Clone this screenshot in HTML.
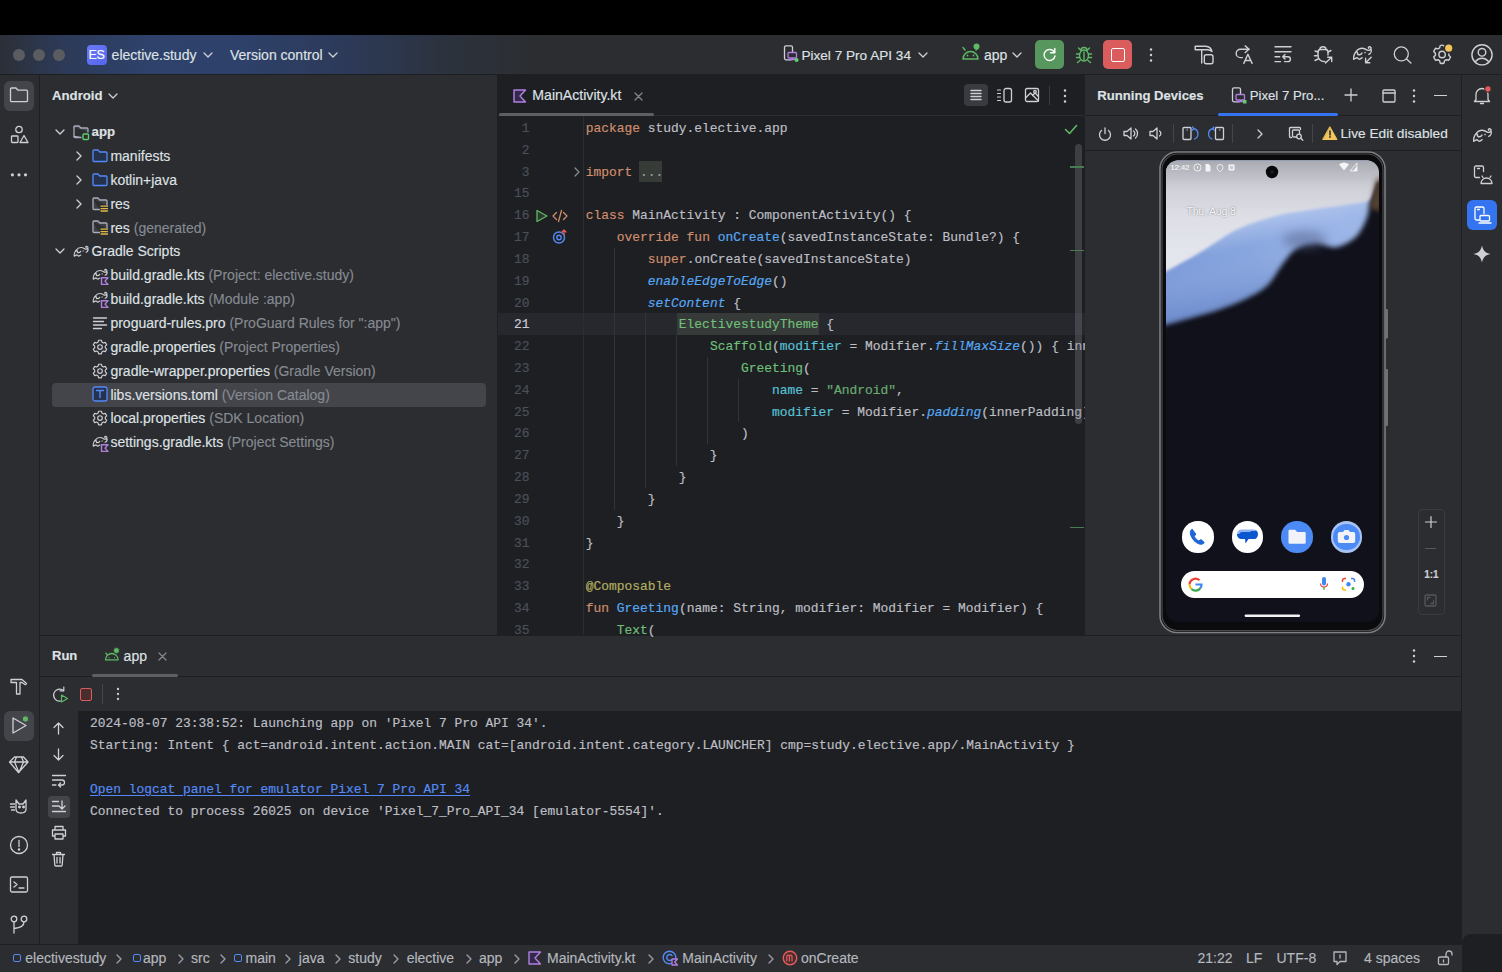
<!DOCTYPE html>
<html><head><meta charset="utf-8">
<style>
*{margin:0;padding:0;box-sizing:border-box}
html,body{width:1502px;height:972px;overflow:hidden;background:#000;font-family:"Liberation Sans",sans-serif;color:#DFE1E5;font-size:14px}
.a{position:absolute}
.t{position:absolute;white-space:pre}
svg{position:absolute;overflow:visible}
.t{-webkit-text-stroke:0.15px currentColor}
.t.m{-webkit-text-stroke:0.18px currentColor}
.ic{fill:none;stroke:#CED0D6;stroke-width:1.3;stroke-linecap:round;stroke-linejoin:round}
</style></head><body>

<div class="a" style="left:0px;top:35px;width:1502px;height:40px;background:#2B2D30;"></div>
<div class="a" style="left:0px;top:35px;width:1502px;height:39px;background:linear-gradient(90deg,#2B2F37 0px,#2D3A57 60px,#2E426B 150px,#2E416A 240px,#2D3A5A 340px,#2C333F 440px,#2B2D30 540px);"></div>
<div class="a" style="left:0px;top:74px;width:1502px;height:1px;background:#1E1F22;"></div>
<div class="a" style="left:0px;top:75px;width:39px;height:870px;background:#2B2D30;"></div>
<div class="a" style="left:39px;top:75px;width:1px;height:870px;background:#1E1F22;"></div>
<div class="a" style="left:40px;top:75px;width:457px;height:560px;background:#2B2D30;"></div>
<div class="a" style="left:497px;top:75px;width:1px;height:560px;background:#1E1F22;"></div>
<div class="a" style="left:498px;top:75px;width:587px;height:560px;background:#1E1F22;"></div>
<div class="a" style="left:1085px;top:75px;width:376px;height:560px;background:#2B2D30;"></div>
<div class="a" style="left:1461px;top:75px;width:1px;height:870px;background:#1E1F22;"></div>
<div class="a" style="left:1462px;top:75px;width:40px;height:870px;background:#2B2D30;"></div>
<div class="a" style="left:40px;top:635px;width:1421px;height:1px;background:#1E1F22;"></div>
<div class="a" style="left:40px;top:636px;width:1421px;height:75px;background:#2B2D30;"></div>
<div class="a" style="left:40px;top:676px;width:1421px;height:1px;background:#1E1F22;"></div>
<div class="a" style="left:40px;top:711px;width:38px;height:233px;background:#2B2D30;"></div>
<div class="a" style="left:78px;top:711px;width:1383px;height:233px;background:#1E1F22;"></div>
<div class="a" style="left:0px;top:944px;width:1502px;height:1px;background:#1E1F22;"></div>
<div class="a" style="left:0px;top:945px;width:1502px;height:27px;background:#2B2D30;"></div>
<div class="a" style="left:1462px;top:934px;width:40px;height:38px;background:#1E1F22;border-top-left-radius:9px"></div>
<div class="a" style="left:12.5px;top:48.5px;width:12px;height:12px;border-radius:6px;background:#5B5C60"></div>
<div class="a" style="left:32.5px;top:48.5px;width:12px;height:12px;border-radius:6px;background:#5B5C60"></div>
<div class="a" style="left:52.5px;top:48.5px;width:12px;height:12px;border-radius:6px;background:#5B5C60"></div>
<div class="a" style="left:87px;top:45px;width:20px;height:20px;background:linear-gradient(135deg,#6B7BF5,#5565EE);border-radius:4px"></div>
<div class="t" style="left:88.60px;top:46.23px;font-size:12.6px;line-height:18px;color:#FFFFFF;font-weight:400;font-family:'Liberation Sans',sans-serif;letter-spacing:-0.6px">ES</div>
<div class="t" style="left:111.60px;top:45.15px;font-size:14px;line-height:20px;color:#DFE1E5;font-weight:400;font-family:'Liberation Sans',sans-serif;">elective.study</div>
<svg class="ic" style="left:202.5px;top:52px;" width="10" height="6" viewBox="0 0 10 6"><path d="M1 1 L5 5 L9 1" style="stroke:#CED0D6"/></svg>
<div class="t" style="left:230.00px;top:45.15px;font-size:14px;line-height:20px;color:#DFE1E5;font-weight:400;font-family:'Liberation Sans',sans-serif;">Version control</div>
<svg class="ic" style="left:328px;top:52px;" width="10" height="6" viewBox="0 0 10 6"><path d="M1 1 L5 5 L9 1" style="stroke:#CED0D6"/></svg>
<svg class="ic" style="left:783px;top:45px;" width="16" height="18" viewBox="0 0 16 18"><rect x="1.5" y="0.8" width="8" height="14" rx="1.5"/><rect x="5" y="7.5" width="8.5" height="5.5" rx="1" style="stroke:#B07FE0;fill:#2B2D30"/><path d="M6 14.5 h6" style="stroke:#B07FE0"/><circle cx="13.6" cy="15" r="2" style="fill:#5FD068;stroke:none"/></svg>
<div class="t" style="left:801.40px;top:45.79px;font-size:13.6px;line-height:19px;color:#DFE1E5;font-weight:400;font-family:'Liberation Sans',sans-serif;">Pixel 7 Pro API 34</div>
<svg class="ic" style="left:918px;top:52px;" width="10" height="6" viewBox="0 0 10 6"><path d="M1 1 L5 5 L9 1" style="stroke:#CED0D6"/></svg>
<svg class="ic" style="left:961px;top:44px;" width="20" height="18" viewBox="0 0 20 18"><path d="M2 15 a7.5 7.5 0 0 1 15 0 z" style="stroke:#5FB865;stroke-width:1.5"/><path d="M4 6 l-2 -2.5 M15 6 l2 -2.5" style="stroke:#5FB865;stroke-width:1.5"/><circle cx="6.5" cy="11.5" r="0.9" style="fill:#5FB865;stroke:none"/><circle cx="12.5" cy="11.5" r="0.9" style="fill:#5FB865;stroke:none"/><circle cx="15.5" cy="2.5" r="3" style="fill:#5FB865;stroke:none"/></svg>
<div class="t" style="left:984.00px;top:45.15px;font-size:14px;line-height:20px;color:#DFE1E5;font-weight:400;font-family:'Liberation Sans',sans-serif;">app</div>
<svg class="ic" style="left:1012px;top:52px;" width="10" height="6" viewBox="0 0 10 6"><path d="M1 1 L5 5 L9 1" style="stroke:#CED0D6"/></svg>
<div class="a" style="left:1035px;top:40px;width:29px;height:29px;background:#57965C;border-radius:5px"></div>
<svg class="ic" style="left:1041px;top:46px;" width="17" height="17" viewBox="0 0 17 17"><path d="M13.5 6.5 A5.5 5.5 0 1 0 14 10" style="stroke:#FFFFFF;stroke-width:1.4"/><path d="M13.8 2.5 v4.3 h-4.3" style="stroke:#FFFFFF;stroke-width:1.4"/></svg>
<svg class="ic" style="left:1075px;top:45px;" width="18" height="18" viewBox="0 0 18 18"><ellipse cx="9" cy="10.5" rx="4.5" ry="5.5" style="stroke:#5FB865;stroke-width:1.4"/><path d="M6 5.5 a3 3 0 0 1 6 0 M4.5 9 h-3 M13.5 9 h3 M4.5 12.5 h-3 M13.5 12.5 h3 M5 15.5 l-2.5 2 M13 15.5 l2.5 2 M5.5 5 l-2 -2 M12.5 5 l2 -2 M9 7 v8" style="stroke:#5FB865;stroke-width:1.4"/></svg>
<div class="a" style="left:1103px;top:40px;width:29px;height:29px;background:#DB5C5C;border-radius:5px"></div>
<div class="a" style="left:1110.5px;top:47.5px;width:14px;height:14px;background:transparent;border:1.6px solid #FFFFFF;border-radius:2px"></div>
<svg class="ic" style="left:1143px;top:46.5px;" width="16" height="16" viewBox="0 0 16 16"><circle cx="8" cy="2.5" r="1.2" style="fill:#CED0D6;stroke:none"/><circle cx="8" cy="8" r="1.2" style="fill:#CED0D6;stroke:none"/><circle cx="8" cy="13.5" r="1.2" style="fill:#CED0D6;stroke:none"/></svg>
<svg class="ic" style="left:1190px;top:40px;" width="30" height="30" viewBox="0 0 30 30"><path d="M5.2 6.3 h10.5 a7 7 0 0 1 6.3 5.2 a6 6 0 0 0 -4.8 -1.8 h-12 z" style="stroke-width:1.4"/><path d="M11.7 9.8 v13.2" style="stroke-width:1.4"/><rect x="14.3" y="14.7" width="8.7" height="9.1" rx="2" style="stroke-width:1.4"/></svg>
<svg class="ic" style="left:1230px;top:40px;" width="30" height="30" viewBox="0 0 30 30"><path d="M12.4 17.6 h-2 a4.2 4.2 0 0 1 0 -8.4 h8.6" style="stroke-width:1.4"/><path d="M15.2 5.9 l3.8 3.3 l-3.8 3.3" style="stroke-width:1.4"/><path d="M13.8 23.4 l4.1 -9.1 l4.2 9.1 M15.1 20.5 h5.6" style="stroke-width:1.4"/></svg>
<svg class="ic" style="left:1270px;top:40px;" width="30" height="30" viewBox="0 0 30 30"><path d="M5 6.7 h16 M5 11.7 h16 M5 16.8 h4.7 M5 21.6 h5.5" style="stroke-width:1.4"/><path d="M14.5 21.6 h3.5 a2.4 2.4 0 0 0 0 -4.8 h-5.3 M15 14.5 l-2.3 2.3 l2.3 2.3" style="stroke-width:1.4"/></svg>
<svg class="ic" style="left:1310px;top:40px;" width="30" height="30" viewBox="0 0 30 30"><path d="M9.7 9.5 a3.3 3.3 0 0 1 6.5 0" style="stroke-width:1.4"/><path d="M15 21.5 a6 6 0 0 1 -7 -5.5 v-4 a2.5 2.5 0 0 1 2.5 -2.5 h5 a2.5 2.5 0 0 1 2.5 2.5 v3" style="stroke-width:1.4"/><path d="M5 11 l3 1 M4.5 15.8 h3.5 M5 20.5 l3 -1.5 M21 10.5 l-3 1.5" style="stroke-width:1.4"/><path d="M15.5 23 l6 -5.8 M17.7 17.2 h4 v4.4" style="stroke-width:1.4"/></svg>
<svg class="ic" style="left:1352px;top:45px;" width="24" height="19" viewBox="0 0 24 19"><g transform="scale(1.0)" style="stroke-width:1.40"><path d="M1.7 14.3 C1.2 12 2.5 8 4.4 6.4 C5.5 4.5 7.5 3.2 10.3 3.2 C12.5 3.2 14 4.3 15.3 5.1 C16.5 5.6 18.5 5.5 19 3.8 C19.3 2.3 18 1.5 17 1.8 C16.2 2.1 16.2 3 16.8 3.3 M19.2 4.6 C19.6 6.5 18.5 8.8 16.8 9.3 M5.2 6.9 C5.2 9 6.5 9.8 7.4 9.8 C8.5 9.8 9.5 9 9.9 8.1 M1.7 14.3 C3 14 4 12.5 5.2 12.8 C6.2 13.2 6.5 14.3 7.4 14.3 C8.5 14.3 9.2 12.8 10.1 12.8"/><circle cx="13" cy="7.6" r="0.8" style="fill:#CED0D6;stroke:none"/></g><path d="M19.2 12.3 l-5.6 5.4 M13.6 13.3 v4.4 h4.2" style="stroke-width:1.4"/></svg>
<svg class="ic" style="left:1390px;top:40px;" width="30" height="30" viewBox="0 0 30 30"><circle cx="11.3" cy="13.9" r="7"/><path d="M16.5 19 l4.4 4" style="stroke-width:1.4"/></svg>
<svg class="ic" style="left:1430px;top:40px;" width="30" height="30" viewBox="0 0 30 30"><path d="M10.2 5.6 q1.9 -0.9 3.8 0 l0.6 2.3 l1.7 1 l2.3 -0.6 q1.2 1.6 1.9 3.3 l-1.7 1.7 v2 l1.7 1.7 q-0.7 1.8 -1.9 3.3 l-2.3 -0.6 l-1.7 1 l-0.6 2.3 q-1.9 0.9 -3.8 0 l-0.6 -2.3 l-1.7 -1 l-2.3 0.6 q-1.2 -1.6 -1.9 -3.3 l1.7 -1.7 v-2 l-1.7 -1.7 q0.7 -1.8 1.9 -3.3 l2.3 0.6 l1.7 -1 z" style="stroke-width:1.4"/><circle cx="12.1" cy="14.5" r="3.2" style="stroke-width:1.4"/><circle cx="18.7" cy="8.2" r="4.4" style="fill:#F2C55C;stroke:#2B2D30;stroke-width:1.6"/></svg>
<svg class="ic" style="left:1470px;top:40px;" width="30" height="30" viewBox="0 0 30 30"><circle cx="12" cy="14.8" r="10.1" style="stroke-width:1.4"/><circle cx="12" cy="12.3" r="3.8" style="stroke-width:1.4"/><path d="M5.7 21.3 a8 8 0 0 1 12.6 0" style="stroke-width:1.4"/></svg>
<div class="a" style="left:4px;top:80.5px;width:30px;height:30px;background:#43454A;border-radius:6px"></div>
<svg class="ic" style="left:9px;top:86px;" width="21" height="18" viewBox="0 0 21 18"><path d="M1.5 3 a1 1 0 0 1 1 -1 h4.5 l2 2.2 h8.5 a1 1 0 0 1 1 1 v9.5 a1 1 0 0 1 -1 1 h-15 a1 1 0 0 1 -1 -1 z"/></svg>
<svg class="ic" style="left:10px;top:125px;" width="19" height="19" viewBox="0 0 19 19"><circle cx="9" cy="4.5" r="3.2"/><rect x="1.5" y="11" width="6.5" height="6.5" rx="0.8"/><path d="M14 10.5 l4 7 h-8 z"/></svg>
<svg class="ic" style="left:8px;top:170px;" width="22" height="10" viewBox="0 0 22 10"><circle cx="4.4" cy="4.8" r="1.6" style="fill:#CED0D6;stroke:none"/><circle cx="11" cy="4.8" r="1.6" style="fill:#CED0D6;stroke:none"/><circle cx="17.5" cy="4.8" r="1.6" style="fill:#CED0D6;stroke:none"/></svg>
<svg class="ic" style="left:9px;top:676px;" width="20" height="20" viewBox="0 0 20 20"><path d="M2 3.5 h11 l4.5 4 l-1.2 1.2 l-3.3 -2.2 h-2 v11.5 h-3.5 v-11.5 h-5.5 z"/></svg>
<div class="a" style="left:4px;top:710.5px;width:30px;height:30px;background:#43454A;border-radius:6px"></div>
<svg class="ic" style="left:10px;top:716px;" width="19" height="19" viewBox="0 0 19 19"><path d="M3 2 l13 7.5 l-13 7.5 z"/><circle cx="15.5" cy="3" r="3.2" style="fill:#5FB865;stroke:#43454A;stroke-width:1"/></svg>
<svg class="ic" style="left:9px;top:755px;" width="21" height="19" viewBox="0 0 21 19"><path d="M5.5 2 h9 l4.5 5 l-9.5 10.5 l-9 -10.5 z M1 7 h18 M7.5 2 l-2 5 l4.5 10.5 l4.5 -10.5 l-2 -5"/></svg>
<svg class="ic" style="left:9px;top:796px;" width="21" height="19" viewBox="0 0 21 19"><path d="M7 4 l3 4 h4 l3 -4 v9 c0 2.5 -2 4 -5 4 h-0 c-3 0 -5 -1.5 -5 -4 z M1.5 8 h4 M1.5 11 h4 M2.5 14 h3"/><circle cx="10.5" cy="11" r="0.8" style="fill:#CED0D6"/><circle cx="14.5" cy="11" r="0.8" style="fill:#CED0D6"/></svg>
<svg class="ic" style="left:9px;top:834.5px;" width="21" height="21" viewBox="0 0 21 21"><circle cx="10" cy="10" r="8.5"/><path d="M10 5.5 v6"/><circle cx="10" cy="14.5" r="0.6" style="fill:#CED0D6"/></svg>
<svg class="ic" style="left:9px;top:875px;" width="21" height="19" viewBox="0 0 21 19"><rect x="1.5" y="2" width="17" height="15" rx="1.5"/><path d="M5 7 l3 2.5 l-3 2.5 M10 13 h5"/></svg>
<svg class="ic" style="left:9px;top:913.5px;" width="21" height="21" viewBox="0 0 21 21"><circle cx="5" cy="5" r="2.8"/><circle cx="15" cy="5" r="2.8"/><path d="M5 8 v11 M15 8 c0 4 -3 5.5 -10 6.5"/></svg>
<div class="t" style="left:52.00px;top:86.72px;font-size:13.2px;line-height:18px;color:#DFE1E5;font-weight:700;font-family:'Liberation Sans',sans-serif;">Android</div>
<svg class="ic" style="left:107.5px;top:92.5px;" width="10" height="6" viewBox="0 0 10 6"><path d="M1 1 L5 5 L9 1" style="stroke:#CED0D6"/></svg>
<div class="a" style="left:52px;top:383px;width:434px;height:23.5px;background:#43454A;border-radius:4px"></div>
<svg class="ic" style="left:55.0px;top:129.0px;" width="10" height="6" viewBox="0 0 10 6"><path d="M1 1 L5 5 L9 1" style="stroke:#CED0D6"/></svg>
<svg class="ic" style="left:73.0px;top:125.0px;" width="17" height="15" viewBox="0 0 17 15"><path d="M1 2 a1 1 0 0 1 1 -1 h4 l1.8 2 h6.2 a1 1 0 0 1 1 1 v3 M8 12.5 h-6 a1 1 0 0 1 -1 -1 z" style="stroke:#A8ADBD;fill:#43454A"/><path d="M1 2 v9.5" style="stroke:#A8ADBD"/><rect x="10" y="9" width="5.5" height="5.5" rx="1" style="stroke:#5FD068;stroke-width:1.4;fill:#2B2D30"/></svg>
<div class="t" style="left:91.60px;top:123.42px;font-size:13.2px;line-height:18px;color:#DFE1E5;font-weight:700;font-family:'Liberation Sans',sans-serif;">app</div>
<svg class="ic" style="left:76px;top:150.85px;" width="6" height="10" viewBox="0 0 6 10"><path d="M1 1 L5 5 L1 9" style="stroke:#CED0D6"/></svg>
<svg class="ic" style="left:91.8px;top:149.35px;" width="16" height="14" viewBox="0 0 16 14"><path d="M1 2 a1 1 0 0 1 1 -1 h4 l1.8 2 h6.2 a1 1 0 0 1 1 1 v7.5 a1 1 0 0 1 -1 1 h-12 a1 1 0 0 1 -1 -1 z" style="stroke:#548AF7;fill:#25324D"/></svg>
<div class="t" style="left:110.40px;top:146.00px;font-size:14px;line-height:20px;color:#DFE1E5;font-weight:400;font-family:'Liberation Sans',sans-serif;">manifests</div>
<svg class="ic" style="left:76px;top:174.7px;" width="6" height="10" viewBox="0 0 6 10"><path d="M1 1 L5 5 L1 9" style="stroke:#CED0D6"/></svg>
<svg class="ic" style="left:91.8px;top:173.2px;" width="16" height="14" viewBox="0 0 16 14"><path d="M1 2 a1 1 0 0 1 1 -1 h4 l1.8 2 h6.2 a1 1 0 0 1 1 1 v7.5 a1 1 0 0 1 -1 1 h-12 a1 1 0 0 1 -1 -1 z" style="stroke:#548AF7;fill:#25324D"/></svg>
<div class="t" style="left:110.40px;top:169.85px;font-size:14px;line-height:20px;color:#DFE1E5;font-weight:400;font-family:'Liberation Sans',sans-serif;">kotlin+java</div>
<svg class="ic" style="left:76px;top:198.55px;" width="6" height="10" viewBox="0 0 6 10"><path d="M1 1 L5 5 L1 9" style="stroke:#CED0D6"/></svg>
<svg class="ic" style="left:91.8px;top:196.55px;" width="17" height="15" viewBox="0 0 17 15"><path d="M1 2 a1 1 0 0 1 1 -1 h4 l1.8 2 h6.2 a1 1 0 0 1 1 1 v4.5 M7.5 12.5 h-5.5 a1 1 0 0 1 -1 -1 v-9.5" style="stroke:#A8ADBD;fill:#3C3E43"/><rect x="8.5" y="8.5" width="7" height="5.5" style="fill:#2B2D30;stroke:none"/><path d="M9 9.2 h6.5 M9 11.6 h6.5 M9 14 h6.5" style="stroke:#E0B84A;stroke-width:1.3"/></svg>
<div class="t" style="left:110.40px;top:193.70px;font-size:14px;line-height:20px;color:#DFE1E5;font-weight:400;font-family:'Liberation Sans',sans-serif;">res</div>
<svg class="ic" style="left:91.8px;top:220.4px;" width="17" height="15" viewBox="0 0 17 15"><path d="M1 2 a1 1 0 0 1 1 -1 h4 l1.8 2 h6.2 a1 1 0 0 1 1 1 v4.5 M7.5 12.5 h-5.5 a1 1 0 0 1 -1 -1 v-9.5" style="stroke:#A8ADBD;fill:#3C3E43"/><rect x="8.5" y="8.5" width="7" height="5.5" style="fill:#2B2D30;stroke:none"/><path d="M9 9.2 h6.5 M9 11.6 h6.5 M9 14 h6.5" style="stroke:#E0B84A;stroke-width:1.3"/></svg>
<div class="t" style="left:110.40px;top:217.55px;font-size:14px;line-height:20px;color:#DFE1E5;font-weight:400;font-family:'Liberation Sans',sans-serif;">res<span style="color:#868A91"> (generated)</span></div>
<svg class="ic" style="left:55.0px;top:248.25px;" width="10" height="6" viewBox="0 0 10 6"><path d="M1 1 L5 5 L9 1" style="stroke:#CED0D6"/></svg>
<svg class="ic" style="left:73.0px;top:244.75px;" width="19" height="15" viewBox="0 0 19 15"><g transform="scale(0.78)" style="stroke-width:1.54"><path d="M1.7 14.3 C1.2 12 2.5 8 4.4 6.4 C5.5 4.5 7.5 3.2 10.3 3.2 C12.5 3.2 14 4.3 15.3 5.1 C16.5 5.6 18.5 5.5 19 3.8 C19.3 2.3 18 1.5 17 1.8 C16.2 2.1 16.2 3 16.8 3.3 M19.2 4.6 C19.6 6.5 18.5 8.8 16.8 9.3 M5.2 6.9 C5.2 9 6.5 9.8 7.4 9.8 C8.5 9.8 9.5 9 9.9 8.1 M1.7 14.3 C3 14 4 12.5 5.2 12.8 C6.2 13.2 6.5 14.3 7.4 14.3 C8.5 14.3 9.2 12.8 10.1 12.8"/><circle cx="13" cy="7.6" r="0.8" style="fill:#CED0D6;stroke:none"/></g></svg>
<div class="t" style="left:91.60px;top:241.40px;font-size:14px;line-height:20px;color:#DFE1E5;font-weight:400;font-family:'Liberation Sans',sans-serif;">Gradle Scripts</div>
<svg class="ic" style="left:91.8px;top:267.6px;" width="19" height="15" viewBox="0 0 19 15"><g transform="scale(0.78)" style="stroke-width:1.54"><path d="M1.7 14.3 C1.2 12 2.5 8 4.4 6.4 C5.5 4.5 7.5 3.2 10.3 3.2 C12.5 3.2 14 4.3 15.3 5.1 C16.5 5.6 18.5 5.5 19 3.8 C19.3 2.3 18 1.5 17 1.8 C16.2 2.1 16.2 3 16.8 3.3 M19.2 4.6 C19.6 6.5 18.5 8.8 16.8 9.3 M5.2 6.9 C5.2 9 6.5 9.8 7.4 9.8 C8.5 9.8 9.5 9 9.9 8.1 M1.7 14.3 C3 14 4 12.5 5.2 12.8 C6.2 13.2 6.5 14.3 7.4 14.3 C8.5 14.3 9.2 12.8 10.1 12.8"/><circle cx="13" cy="7.6" r="0.8" style="fill:#CED0D6;stroke:none"/></g><path d="M16 9.8 h-6.5 v6.6 h6.5 l-3 -3.3 z" style="stroke:#B07FE0;stroke-width:1.4;fill:#2B2D30"/></svg>
<div class="t" style="left:110.40px;top:265.25px;font-size:14px;line-height:20px;color:#DFE1E5;font-weight:400;font-family:'Liberation Sans',sans-serif;">build.gradle.kts<span style="color:#868A91"> (Project: elective.study)</span></div>
<svg class="ic" style="left:91.8px;top:291.45000000000005px;" width="19" height="15" viewBox="0 0 19 15"><g transform="scale(0.78)" style="stroke-width:1.54"><path d="M1.7 14.3 C1.2 12 2.5 8 4.4 6.4 C5.5 4.5 7.5 3.2 10.3 3.2 C12.5 3.2 14 4.3 15.3 5.1 C16.5 5.6 18.5 5.5 19 3.8 C19.3 2.3 18 1.5 17 1.8 C16.2 2.1 16.2 3 16.8 3.3 M19.2 4.6 C19.6 6.5 18.5 8.8 16.8 9.3 M5.2 6.9 C5.2 9 6.5 9.8 7.4 9.8 C8.5 9.8 9.5 9 9.9 8.1 M1.7 14.3 C3 14 4 12.5 5.2 12.8 C6.2 13.2 6.5 14.3 7.4 14.3 C8.5 14.3 9.2 12.8 10.1 12.8"/><circle cx="13" cy="7.6" r="0.8" style="fill:#CED0D6;stroke:none"/></g><path d="M16 9.8 h-6.5 v6.6 h6.5 l-3 -3.3 z" style="stroke:#B07FE0;stroke-width:1.4;fill:#2B2D30"/></svg>
<div class="t" style="left:110.40px;top:289.10px;font-size:14px;line-height:20px;color:#DFE1E5;font-weight:400;font-family:'Liberation Sans',sans-serif;">build.gradle.kts<span style="color:#868A91"> (Module :app)</span></div>
<svg class="ic" style="left:92.3px;top:315.8px;" width="16" height="14" viewBox="0 0 16 14"><path d="M1.5 2 h13 M1.5 5.5 h10 M1.5 9 h13 M1.5 12.5 h8"/></svg>
<div class="t" style="left:110.40px;top:312.95px;font-size:14px;line-height:20px;color:#DFE1E5;font-weight:400;font-family:'Liberation Sans',sans-serif;">proguard-rules.pro<span style="color:#868A91"> (ProGuard Rules for ":app")</span></div>
<svg class="ic" style="left:91.8px;top:338.65px;" width="16" height="16" viewBox="0 0 16 16"><path d="M6.6 1.2 h2.8 l0.5 1.9 l1.5 0.9 l1.9 -0.6 l1.4 2.4 l-1.4 1.3 v1.8 l1.4 1.3 l-1.4 2.4 l-1.9 -0.6 l-1.5 0.9 l-0.5 1.9 h-2.8 l-0.5 -1.9 l-1.5 -0.9 l-1.9 0.6 l-1.4 -2.4 l1.4 -1.3 v-1.8 l-1.4 -1.3 l1.4 -2.4 l1.9 0.6 l1.5 -0.9 z" style="stroke-width:1.15"/><circle cx="8" cy="8" r="2.3" style="stroke-width:1.15"/></svg>
<div class="t" style="left:110.40px;top:336.80px;font-size:14px;line-height:20px;color:#DFE1E5;font-weight:400;font-family:'Liberation Sans',sans-serif;">gradle.properties<span style="color:#868A91"> (Project Properties)</span></div>
<svg class="ic" style="left:91.8px;top:362.5px;" width="16" height="16" viewBox="0 0 16 16"><path d="M6.6 1.2 h2.8 l0.5 1.9 l1.5 0.9 l1.9 -0.6 l1.4 2.4 l-1.4 1.3 v1.8 l1.4 1.3 l-1.4 2.4 l-1.9 -0.6 l-1.5 0.9 l-0.5 1.9 h-2.8 l-0.5 -1.9 l-1.5 -0.9 l-1.9 0.6 l-1.4 -2.4 l1.4 -1.3 v-1.8 l-1.4 -1.3 l1.4 -2.4 l1.9 0.6 l1.5 -0.9 z" style="stroke-width:1.15"/><circle cx="8" cy="8" r="2.3" style="stroke-width:1.15"/></svg>
<div class="t" style="left:110.40px;top:360.65px;font-size:14px;line-height:20px;color:#DFE1E5;font-weight:400;font-family:'Liberation Sans',sans-serif;">gradle-wrapper.properties<span style="color:#868A91"> (Gradle Version)</span></div>
<svg class="ic" style="left:91.8px;top:386.35px;" width="16" height="16" viewBox="0 0 16 16"><rect x="1" y="1" width="14" height="14" rx="2" style="stroke:#548AF7;fill:#25324D"/><path d="M4.5 4.5 h7 M8 4.5 v7" style="stroke:#548AF7;stroke-width:1.4"/></svg>
<div class="t" style="left:110.40px;top:384.50px;font-size:14px;line-height:20px;color:#DFE1E5;font-weight:400;font-family:'Liberation Sans',sans-serif;">libs.versions.toml<span style="color:#868A91"> (Version Catalog)</span></div>
<svg class="ic" style="left:91.8px;top:410.20000000000005px;" width="16" height="16" viewBox="0 0 16 16"><path d="M6.6 1.2 h2.8 l0.5 1.9 l1.5 0.9 l1.9 -0.6 l1.4 2.4 l-1.4 1.3 v1.8 l1.4 1.3 l-1.4 2.4 l-1.9 -0.6 l-1.5 0.9 l-0.5 1.9 h-2.8 l-0.5 -1.9 l-1.5 -0.9 l-1.9 0.6 l-1.4 -2.4 l1.4 -1.3 v-1.8 l-1.4 -1.3 l1.4 -2.4 l1.9 0.6 l1.5 -0.9 z" style="stroke-width:1.15"/><circle cx="8" cy="8" r="2.3" style="stroke-width:1.15"/></svg>
<div class="t" style="left:110.40px;top:408.35px;font-size:14px;line-height:20px;color:#DFE1E5;font-weight:400;font-family:'Liberation Sans',sans-serif;">local.properties<span style="color:#868A91"> (SDK Location)</span></div>
<svg class="ic" style="left:91.8px;top:434.55px;" width="19" height="15" viewBox="0 0 19 15"><g transform="scale(0.78)" style="stroke-width:1.54"><path d="M1.7 14.3 C1.2 12 2.5 8 4.4 6.4 C5.5 4.5 7.5 3.2 10.3 3.2 C12.5 3.2 14 4.3 15.3 5.1 C16.5 5.6 18.5 5.5 19 3.8 C19.3 2.3 18 1.5 17 1.8 C16.2 2.1 16.2 3 16.8 3.3 M19.2 4.6 C19.6 6.5 18.5 8.8 16.8 9.3 M5.2 6.9 C5.2 9 6.5 9.8 7.4 9.8 C8.5 9.8 9.5 9 9.9 8.1 M1.7 14.3 C3 14 4 12.5 5.2 12.8 C6.2 13.2 6.5 14.3 7.4 14.3 C8.5 14.3 9.2 12.8 10.1 12.8"/><circle cx="13" cy="7.6" r="0.8" style="fill:#CED0D6;stroke:none"/></g><path d="M16 9.8 h-6.5 v6.6 h6.5 l-3 -3.3 z" style="stroke:#B07FE0;stroke-width:1.4;fill:#2B2D30"/></svg>
<div class="t" style="left:110.40px;top:432.20px;font-size:14px;line-height:20px;color:#DFE1E5;font-weight:400;font-family:'Liberation Sans',sans-serif;">settings.gradle.kts<span style="color:#868A91"> (Project Settings)</span></div>
<svg class="ic" style="left:512.5px;top:88.5px;" width="14" height="14" viewBox="0 0 14 14"><path d="M1 1 h11.5 l-5.5 6 l5.5 6 h-11.5 z" style="stroke:#B07FE0;stroke-width:1.5;fill:#33294A"/></svg>
<div class="t" style="left:532.30px;top:85.41px;font-size:14.1px;line-height:20px;color:#DFE1E5;font-weight:400;font-family:'Liberation Sans',sans-serif;">MainActivity.kt</div>
<svg class="ic" style="left:634px;top:91.5px;" width="9" height="9" viewBox="0 0 9 9"><path d="M1 1 l7 7 M8 1 l-7 7" style="stroke:#868A91;stroke-width:1.2"/></svg>
<div class="a" style="left:498px;top:115px;width:587px;height:1px;background:#2B2D30;"></div>
<div class="a" style="left:499px;top:113px;width:155px;height:3px;background:#5D5F65;border-radius:1.5px"></div>
<div class="a" style="left:964px;top:84px;width:24px;height:22px;background:#393B40;border-radius:4px"></div>
<svg class="ic" style="left:968px;top:87px;" width="16" height="16" viewBox="0 0 16 16"><path d="M3 3.5 h10 M3 6.5 h10 M3 9.5 h10 M3 12.5 h10" style="stroke-width:1.4"/></svg>
<svg class="ic" style="left:996px;top:87px;" width="18" height="16" viewBox="0 0 18 16"><path d="M1.5 3 h3 M1.5 6.5 h3 M1.5 10 h3 M1.5 13.5 h3" style="stroke-width:1.2"/><rect x="8" y="1.5" width="7.5" height="13.5" rx="2"/></svg>
<svg class="ic" style="left:1024px;top:87px;" width="16" height="16" viewBox="0 0 16 16"><rect x="1.5" y="1.5" width="13" height="13" rx="1.5"/><path d="M1.5 11 l5 -5 l8 8 M8.5 8.5 l2.5 -2.5 l3.5 3.5"/><circle cx="11" cy="4.8" r="1.3"/></svg>
<div class="a" style="left:1049px;top:86px;width:1px;height:19px;background:#393B40;"></div>
<svg class="ic" style="left:1057px;top:87.5px;" width="16" height="16" viewBox="0 0 16 16"><circle cx="8" cy="2.5" r="1.2" style="fill:#CED0D6;stroke:none"/><circle cx="8" cy="8" r="1.2" style="fill:#CED0D6;stroke:none"/><circle cx="8" cy="13.5" r="1.2" style="fill:#CED0D6;stroke:none"/></svg>
<div class="a" style="left:498px;top:313.3px;width:587px;height:21.83px;background:#26282E;"></div>
<div class="a" style="left:583px;top:116px;width:1px;height:519px;background:#2B2D30;"></div>
<div class="a" style="left:614.23px;top:247.78px;width:1px;height:261.96px;background:#313438"></div>
<div class="a" style="left:645.26px;top:313.27px;width:1px;height:174.64px;background:#313438"></div>
<div class="a" style="left:676.30px;top:335.10px;width:1px;height:130.98px;background:#313438"></div>
<div class="a" style="left:707.33px;top:356.93px;width:1px;height:87.32px;background:#313438"></div>
<div class="a" style="left:738.36px;top:378.76px;width:1px;height:43.66px;background:#313438"></div>
<div class="a" style="left:639px;top:160.7px;width:23px;height:21.3px;background:#363B37;"></div>
<div class="a" style="left:677px;top:313.3px;width:142px;height:21.83px;background:#363A38;"></div>
<div class="t m" style="left:521.74px;top:119.86px;font-size:12.93px;line-height:18px;color:#4B5059;font-weight:400;font-family:'Liberation Mono',monospace;">1</div>
<div class="t m" style="left:585.80px;top:119.86px;font-size:12.93px;line-height:18px;color:#BCBEC4;font-weight:400;font-family:'Liberation Mono',monospace;"><span style="color:#CF8E6D">package</span><span style="color:#BCBEC4"> study.elective.app</span></div>
<div class="t m" style="left:521.74px;top:141.69px;font-size:12.93px;line-height:18px;color:#4B5059;font-weight:400;font-family:'Liberation Mono',monospace;">2</div>
<div class="t m" style="left:521.74px;top:163.52px;font-size:12.93px;line-height:18px;color:#4B5059;font-weight:400;font-family:'Liberation Mono',monospace;">3</div>
<div class="t m" style="left:585.80px;top:163.52px;font-size:12.93px;line-height:18px;color:#BCBEC4;font-weight:400;font-family:'Liberation Mono',monospace;"><span style="color:#CF8E6D">import</span><span style="color:#BCBEC4"> </span><span style="color:#9A9DA3">...</span></div>
<div class="t m" style="left:513.98px;top:185.35px;font-size:12.93px;line-height:18px;color:#4B5059;font-weight:400;font-family:'Liberation Mono',monospace;">15</div>
<div class="t m" style="left:513.98px;top:207.18px;font-size:12.93px;line-height:18px;color:#4B5059;font-weight:400;font-family:'Liberation Mono',monospace;">16</div>
<div class="t m" style="left:585.80px;top:207.18px;font-size:12.93px;line-height:18px;color:#BCBEC4;font-weight:400;font-family:'Liberation Mono',monospace;"><span style="color:#CF8E6D">class</span><span style="color:#BCBEC4"> MainActivity : ComponentActivity() {</span></div>
<div class="t m" style="left:513.98px;top:229.01px;font-size:12.93px;line-height:18px;color:#4B5059;font-weight:400;font-family:'Liberation Mono',monospace;">17</div>
<div class="t m" style="left:585.80px;top:229.01px;font-size:12.93px;line-height:18px;color:#BCBEC4;font-weight:400;font-family:'Liberation Mono',monospace;"><span style="color:#BCBEC4">    </span><span style="color:#CF8E6D">override fun</span><span style="color:#BCBEC4"> </span><span style="color:#56A8F5">onCreate</span><span style="color:#BCBEC4">(savedInstanceState: Bundle?) {</span></div>
<div class="t m" style="left:513.98px;top:250.84px;font-size:12.93px;line-height:18px;color:#4B5059;font-weight:400;font-family:'Liberation Mono',monospace;">18</div>
<div class="t m" style="left:585.80px;top:250.84px;font-size:12.93px;line-height:18px;color:#BCBEC4;font-weight:400;font-family:'Liberation Mono',monospace;"><span style="color:#BCBEC4">        </span><span style="color:#CF8E6D">super</span><span style="color:#BCBEC4">.onCreate(savedInstanceState)</span></div>
<div class="t m" style="left:513.98px;top:272.67px;font-size:12.93px;line-height:18px;color:#4B5059;font-weight:400;font-family:'Liberation Mono',monospace;">19</div>
<div class="t m" style="left:585.80px;top:272.67px;font-size:12.93px;line-height:18px;color:#BCBEC4;font-weight:400;font-family:'Liberation Mono',monospace;"><span style="color:#BCBEC4">        </span><span style="color:#56A8F5;font-style:italic">enableEdgeToEdge</span><span style="color:#BCBEC4">()</span></div>
<div class="t m" style="left:513.98px;top:294.50px;font-size:12.93px;line-height:18px;color:#4B5059;font-weight:400;font-family:'Liberation Mono',monospace;">20</div>
<div class="t m" style="left:585.80px;top:294.50px;font-size:12.93px;line-height:18px;color:#BCBEC4;font-weight:400;font-family:'Liberation Mono',monospace;"><span style="color:#BCBEC4">        </span><span style="color:#56A8F5;font-style:italic">setContent</span><span style="color:#BCBEC4"> {</span></div>
<div class="t m" style="left:513.98px;top:316.33px;font-size:12.93px;line-height:18px;color:#C9CBD1;font-weight:400;font-family:'Liberation Mono',monospace;">21</div>
<div class="t m" style="left:585.80px;top:316.33px;font-size:12.93px;line-height:18px;color:#BCBEC4;font-weight:400;font-family:'Liberation Mono',monospace;"><span style="color:#BCBEC4">            </span><span style="color:#6FBF7A">ElectivestudyTheme</span><span style="color:#BCBEC4"> {</span></div>
<div class="t m" style="left:513.98px;top:338.16px;font-size:12.93px;line-height:18px;color:#4B5059;font-weight:400;font-family:'Liberation Mono',monospace;">22</div>
<div class="t m" style="left:585.80px;top:338.16px;font-size:12.93px;line-height:18px;color:#BCBEC4;font-weight:400;font-family:'Liberation Mono',monospace;"><span style="color:#BCBEC4">                </span><span style="color:#6FBF7A">Scaffold</span><span style="color:#BCBEC4">(</span><span style="color:#56C1D6">modifier</span><span style="color:#BCBEC4"> = Modifier.</span><span style="color:#56A8F5;font-style:italic">fillMaxSize</span><span style="color:#BCBEC4">()) { innerPadding -&gt;</span></div>
<div class="t m" style="left:513.98px;top:359.99px;font-size:12.93px;line-height:18px;color:#4B5059;font-weight:400;font-family:'Liberation Mono',monospace;">23</div>
<div class="t m" style="left:585.80px;top:359.99px;font-size:12.93px;line-height:18px;color:#BCBEC4;font-weight:400;font-family:'Liberation Mono',monospace;"><span style="color:#BCBEC4">                    </span><span style="color:#6FBF7A">Greeting</span><span style="color:#BCBEC4">(</span></div>
<div class="t m" style="left:513.98px;top:381.82px;font-size:12.93px;line-height:18px;color:#4B5059;font-weight:400;font-family:'Liberation Mono',monospace;">24</div>
<div class="t m" style="left:585.80px;top:381.82px;font-size:12.93px;line-height:18px;color:#BCBEC4;font-weight:400;font-family:'Liberation Mono',monospace;"><span style="color:#BCBEC4">                        </span><span style="color:#56C1D6">name</span><span style="color:#BCBEC4"> = </span><span style="color:#6AAB73">"Android"</span><span style="color:#BCBEC4">,</span></div>
<div class="t m" style="left:513.98px;top:403.65px;font-size:12.93px;line-height:18px;color:#4B5059;font-weight:400;font-family:'Liberation Mono',monospace;">25</div>
<div class="t m" style="left:585.80px;top:403.65px;font-size:12.93px;line-height:18px;color:#BCBEC4;font-weight:400;font-family:'Liberation Mono',monospace;"><span style="color:#BCBEC4">                        </span><span style="color:#56C1D6">modifier</span><span style="color:#BCBEC4"> = Modifier.</span><span style="color:#56A8F5;font-style:italic">padding</span><span style="color:#BCBEC4">(innerPadding)</span></div>
<div class="t m" style="left:513.98px;top:425.48px;font-size:12.93px;line-height:18px;color:#4B5059;font-weight:400;font-family:'Liberation Mono',monospace;">26</div>
<div class="t m" style="left:585.80px;top:425.48px;font-size:12.93px;line-height:18px;color:#BCBEC4;font-weight:400;font-family:'Liberation Mono',monospace;"><span style="color:#BCBEC4">                    )</span></div>
<div class="t m" style="left:513.98px;top:447.31px;font-size:12.93px;line-height:18px;color:#4B5059;font-weight:400;font-family:'Liberation Mono',monospace;">27</div>
<div class="t m" style="left:585.80px;top:447.31px;font-size:12.93px;line-height:18px;color:#BCBEC4;font-weight:400;font-family:'Liberation Mono',monospace;"><span style="color:#BCBEC4">                }</span></div>
<div class="t m" style="left:513.98px;top:469.14px;font-size:12.93px;line-height:18px;color:#4B5059;font-weight:400;font-family:'Liberation Mono',monospace;">28</div>
<div class="t m" style="left:585.80px;top:469.14px;font-size:12.93px;line-height:18px;color:#BCBEC4;font-weight:400;font-family:'Liberation Mono',monospace;"><span style="color:#BCBEC4">            }</span></div>
<div class="t m" style="left:513.98px;top:490.97px;font-size:12.93px;line-height:18px;color:#4B5059;font-weight:400;font-family:'Liberation Mono',monospace;">29</div>
<div class="t m" style="left:585.80px;top:490.97px;font-size:12.93px;line-height:18px;color:#BCBEC4;font-weight:400;font-family:'Liberation Mono',monospace;"><span style="color:#BCBEC4">        }</span></div>
<div class="t m" style="left:513.98px;top:512.80px;font-size:12.93px;line-height:18px;color:#4B5059;font-weight:400;font-family:'Liberation Mono',monospace;">30</div>
<div class="t m" style="left:585.80px;top:512.80px;font-size:12.93px;line-height:18px;color:#BCBEC4;font-weight:400;font-family:'Liberation Mono',monospace;"><span style="color:#BCBEC4">    }</span></div>
<div class="t m" style="left:513.98px;top:534.63px;font-size:12.93px;line-height:18px;color:#4B5059;font-weight:400;font-family:'Liberation Mono',monospace;">31</div>
<div class="t m" style="left:585.80px;top:534.63px;font-size:12.93px;line-height:18px;color:#BCBEC4;font-weight:400;font-family:'Liberation Mono',monospace;"><span style="color:#BCBEC4">}</span></div>
<div class="t m" style="left:513.98px;top:556.46px;font-size:12.93px;line-height:18px;color:#4B5059;font-weight:400;font-family:'Liberation Mono',monospace;">32</div>
<div class="t m" style="left:513.98px;top:578.29px;font-size:12.93px;line-height:18px;color:#4B5059;font-weight:400;font-family:'Liberation Mono',monospace;">33</div>
<div class="t m" style="left:585.80px;top:578.29px;font-size:12.93px;line-height:18px;color:#BCBEC4;font-weight:400;font-family:'Liberation Mono',monospace;"><span style="color:#B3AE60">@Composable</span></div>
<div class="t m" style="left:513.98px;top:600.12px;font-size:12.93px;line-height:18px;color:#4B5059;font-weight:400;font-family:'Liberation Mono',monospace;">34</div>
<div class="t m" style="left:585.80px;top:600.12px;font-size:12.93px;line-height:18px;color:#BCBEC4;font-weight:400;font-family:'Liberation Mono',monospace;"><span style="color:#CF8E6D">fun</span><span style="color:#BCBEC4"> </span><span style="color:#56A8F5">Greeting</span><span style="color:#BCBEC4">(name: String, modifier: Modifier = Modifier) {</span></div>
<div class="t m" style="left:513.98px;top:621.95px;font-size:12.93px;line-height:18px;color:#4B5059;font-weight:400;font-family:'Liberation Mono',monospace;">35</div>
<div class="t m" style="left:585.80px;top:621.95px;font-size:12.93px;line-height:18px;color:#BCBEC4;font-weight:400;font-family:'Liberation Mono',monospace;"><span style="color:#BCBEC4">    </span><span style="color:#6FBF7A">Text</span><span style="color:#BCBEC4">(</span></div>
<svg class="ic" style="left:573.5px;top:166.5px;" width="6" height="10" viewBox="0 0 6 10"><path d="M1 1 L5 5 L1 9" style="stroke:#868A91"/></svg>
<svg class="ic" style="left:535px;top:209px;" width="14" height="14" viewBox="0 0 14 14"><path d="M2 1.5 l10 5.5 l-10 5.5 z" style="stroke:#5FB865;stroke-width:1.3;fill:#2A3A2E"/></svg>
<svg class="ic" style="left:552px;top:209px;" width="16" height="14" viewBox="0 0 16 14"><path d="M4.5 3.5 l-3.5 3.5 l3.5 3.5 M11.5 3.5 l3.5 3.5 l-3.5 3.5 M9.5 1.5 l-3 11" style="stroke:#CF8E6D;stroke-width:1.3"/></svg>
<svg class="ic" style="left:552px;top:229px;" width="16" height="16" viewBox="0 0 16 16"><circle cx="7" cy="8.5" r="5.5" style="stroke:#548AF7;stroke-width:1.4"/><circle cx="7" cy="8.5" r="2.2" style="stroke:#548AF7;stroke-width:1.4"/><path d="M12 6 v-5 M10 3 l2 -2 l2 2" style="stroke:#E55B5B;stroke-width:1.3"/></svg>
<svg class="ic" style="left:1064px;top:124px;" width="14" height="11" viewBox="0 0 14 11"><path d="M1.5 5.5 l4 4 l7 -8" style="stroke:#5FB865;stroke-width:1.6"/></svg>
<div class="a" style="left:1075px;top:144px;width:7px;height:280px;background:rgba(120,123,130,0.35);border-radius:3.5px"></div>
<div class="a" style="left:1070px;top:166.2px;width:14px;height:1.6px;background:#4A7A52;"></div>
<div class="a" style="left:1070px;top:249.7px;width:14px;height:1.6px;background:#4A7A52;"></div>
<div class="a" style="left:1070px;top:526.7px;width:14px;height:1.6px;background:#4A7A52;"></div>
<div class="a" style="left:1085px;top:75px;width:376px;height:560px;background:#2B2D30;"></div>
<div class="t" style="left:1097.30px;top:86.96px;font-size:13.1px;line-height:18px;color:#DFE1E5;font-weight:700;font-family:'Liberation Sans',sans-serif;">Running Devices</div>
<svg class="ic" style="left:1231px;top:87px;" width="16" height="18" viewBox="0 0 16 18"><rect x="1.5" y="0.8" width="8" height="14" rx="1.5"/><rect x="5" y="7.5" width="8.5" height="5.5" rx="1" style="stroke:#B07FE0;fill:#2B2D30"/><path d="M6 14.5 h6" style="stroke:#B07FE0"/><rect x="12" y="13" width="3.5" height="3.5" style="fill:#5FD068;stroke:none"/></svg>
<div class="t" style="left:1249.70px;top:86.72px;font-size:13.2px;line-height:18px;color:#DFE1E5;font-weight:400;font-family:'Liberation Sans',sans-serif;">Pixel 7 Pro...</div>
<div class="a" style="left:1085px;top:115px;width:376px;height:1px;background:#1E1F22;"></div>
<div class="a" style="left:1218px;top:113px;width:120px;height:3px;background:#3574F0;border-radius:1.5px"></div>
<svg class="ic" style="left:1343.5px;top:88px;" width="14" height="14" viewBox="0 0 14 14"><path d="M7 1 v12 M1 7 h12" style="stroke-width:1.3"/></svg>
<svg class="ic" style="left:1381.5px;top:88.5px;" width="14" height="14" viewBox="0 0 14 14"><rect x="1" y="1" width="12" height="12" rx="1"/><path d="M1 4 h12" style="stroke-width:1.6"/></svg>
<svg class="ic" style="left:1406px;top:87.5px;" width="16" height="16" viewBox="0 0 16 16"><circle cx="8" cy="2.5" r="1.2" style="fill:#CED0D6;stroke:none"/><circle cx="8" cy="8" r="1.2" style="fill:#CED0D6;stroke:none"/><circle cx="8" cy="13.5" r="1.2" style="fill:#CED0D6;stroke:none"/></svg>
<div class="a" style="left:1434px;top:95px;width:13px;height:1.4px;background:#CED0D6;"></div>
<svg class="ic" style="left:1098px;top:127px;" width="14" height="13" viewBox="0 0 14 13"><path d="M7 1 v5.5"/><path d="M3.5 3.5 a5.5 5.5 0 1 0 7 0"/></svg>
<svg class="ic" style="left:1123px;top:127px;" width="16" height="13" viewBox="0 0 16 13"><path d="M1 4.5 h3 l4 -3.5 v11 l-4 -3.5 h-3 z M10.5 4 a3 3 0 0 1 0 5 M12.5 2 a6 6 0 0 1 0 9"/></svg>
<svg class="ic" style="left:1149px;top:127px;" width="13" height="13" viewBox="0 0 13 13"><path d="M1 4.5 h3 l4 -3.5 v11 l-4 -3.5 h-3 z M10.5 4 a3 3 0 0 1 0 5"/></svg>
<div class="a" style="left:1173px;top:123.5px;width:1px;height:19.5px;background:#43454A;"></div>
<svg class="ic" style="left:1182px;top:126px;" width="17" height="15" viewBox="0 0 17 15"><rect x="1" y="1.5" width="8" height="12" rx="1"/><path d="M5 4 h0.5" style="stroke-width:1"/><path d="M11.5 2.5 a5.5 5.5 0 0 1 1 10.5" style="stroke:#548AF7"/><path d="M10.5 1 l1.5 1.8 l-1.8 1.5" style="stroke:#548AF7"/></svg>
<svg class="ic" style="left:1207.5px;top:126px;" width="17" height="15" viewBox="0 0 17 15"><rect x="7.5" y="1.5" width="8" height="12" rx="1"/><path d="M11.5 4 h0.5" style="stroke-width:1"/><path d="M5 2.5 a5.5 5.5 0 0 0 -1 10.5" style="stroke:#548AF7"/><path d="M6 1 l-1.5 1.8 l1.8 1.5" style="stroke:#548AF7"/></svg>
<div class="a" style="left:1232px;top:123.5px;width:1px;height:19.5px;background:#43454A;"></div>
<svg class="ic" style="left:1257px;top:128.5px;" width="6" height="10" viewBox="0 0 6 10"><path d="M1 1 L5 5 L1 9" style="stroke:#CED0D6"/></svg>
<svg class="ic" style="left:1288px;top:126px;" width="17" height="15" viewBox="0 0 17 15"><path d="M3.5 11.5 h-1 a1 1 0 0 1 -1 -1 v-8 a1 1 0 0 1 1 -1 h9 a1 1 0 0 1 1 1 v1"/><rect x="4.5" y="4" width="7" height="7" rx="1"/><circle cx="11" cy="10.5" r="2.3" style="fill:#2B2D30"/><path d="M12.8 12.3 l2 2"/></svg>
<div class="a" style="left:1312px;top:123.5px;width:1px;height:19.5px;background:#43454A;"></div>
<svg class="ic" style="left:1322px;top:126px;" width="16" height="14" viewBox="0 0 16 14"><path d="M8 1 l7 12.5 h-14 z" style="fill:#F2C55C;stroke:#F2C55C;stroke-width:1"/><path d="M8 5 v4" style="stroke:#2B2D30;stroke-width:1.6"/><circle cx="8" cy="11" r="0.9" style="fill:#2B2D30;stroke:none"/></svg>
<div class="t" style="left:1340.50px;top:124.05px;font-size:13.7px;line-height:19px;color:#DFE1E5;font-weight:400;font-family:'Liberation Sans',sans-serif;">Live Edit disabled</div>
<div class="a" style="left:1085px;top:149.5px;width:376px;height:1px;background:#1E1F22;"></div>
<svg style="left:1150px;top:145px" width="250" height="500" viewBox="0 0 250 500">
<defs>
<clipPath id="scr"><rect x="16" y="15.5" width="213" height="461.5" rx="12"/></clipPath>
<linearGradient id="lg" gradientUnits="userSpaceOnUse" x1="0" y1="15" x2="0" y2="130"><stop offset="0" stop-color="#A8A9B1"/><stop offset="0.25" stop-color="#CFD0D8"/><stop offset="0.5" stop-color="#DEDFE6"/><stop offset="1" stop-color="#E6E8F0"/></linearGradient>
<linearGradient id="bg2" gradientUnits="userSpaceOnUse" x1="20" y1="175" x2="180" y2="60"><stop offset="0" stop-color="#7897D6"/><stop offset="0.5" stop-color="#86A4DE"/><stop offset="1" stop-color="#9CB6E8"/></linearGradient>
<linearGradient id="bg3" gradientUnits="userSpaceOnUse" x1="100" y1="70" x2="120" y2="155"><stop offset="0" stop-color="#BCCDF0" stop-opacity="0.85"/><stop offset="0.35" stop-color="#AFC3EC" stop-opacity="0"/><stop offset="1" stop-color="#5F7DC0" stop-opacity="0.5"/></linearGradient>
<filter id="bl" x="-20%" y="-20%" width="140%" height="140%"><feGaussianBlur stdDeviation="1.8"/></filter>
<filter id="bl2" x="-100%" y="-100%" width="300%" height="300%"><feGaussianBlur stdDeviation="5"/></filter>
<filter id="bl3" x="-100%" y="-100%" width="300%" height="300%"><feGaussianBlur stdDeviation="2.5"/></filter>
</defs>
<rect x="10" y="7" width="225" height="480.5" rx="17" style="fill:#0B0B0D;stroke:#7E7F83;stroke-width:1.6"/>
<rect x="12" y="9" width="221" height="476.5" rx="15.5" style="fill:none;stroke:#4A4B4F;stroke-width:1.2"/>
<rect x="235" y="164" width="3" height="29.5" rx="1" style="fill:#707175"/>
<rect x="235" y="224" width="3" height="57" rx="1" style="fill:#707175"/>
<g clip-path="url(#scr)">
<rect x="0" y="0" width="260" height="500" style="fill:#10111B"/>
<path d="M 0,-5 L 223,-5 L 221.0,47.0  C 220.7,49.2 219.8,55.3 219.0,60.0 C 218.2,64.7 218.3,69.7 216.0,75.0 C 213.7,80.3 210.4,87.5 205.4,92.0 C 200.4,96.5 192.4,101.0 185.9,102.0 C 179.4,103.0 172.8,97.8 166.3,98.0 C 159.8,98.2 152.5,99.7 147.0,103.0 C 141.5,106.3 137.8,112.0 133.0,118.0 C 128.2,124.0 123.5,133.5 118.0,139.0 C 112.5,144.5 108.2,146.8 100.0,151.0 C 91.8,155.2 82.6,159.3 68.6,164.0 C 54.6,168.7 25.7,176.2 15.9,179.0 C 6.1,181.8 11.0,180.7 10.0,181.0 Z" style="fill:url(#bg2)" filter="url(#bl3)"/>
<path d="M 0,-5 L 223,-5 L 221.0,47.0  C 220.7,49.2 219.8,55.3 219.0,60.0 C 218.2,64.7 218.3,69.7 216.0,75.0 C 213.7,80.3 210.4,87.5 205.4,92.0 C 200.4,96.5 192.4,101.0 185.9,102.0 C 179.4,103.0 172.8,97.8 166.3,98.0 C 159.8,98.2 152.5,99.7 147.0,103.0 C 141.5,106.3 137.8,112.0 133.0,118.0 C 128.2,124.0 123.5,133.5 118.0,139.0 C 112.5,144.5 108.2,146.8 100.0,151.0 C 91.8,155.2 82.6,159.3 68.6,164.0 C 54.6,168.7 25.7,176.2 15.9,179.0 C 6.1,181.8 11.0,180.7 10.0,181.0 Z" style="fill:url(#bg3)" filter="url(#bl3)"/>
<path d="M 0,-5 L 240,-5 L 240,37 L 227.0,37.0  C 226.5,38.3 225.0,42.5 224.0,45.0 C 223.0,47.5 222.3,50.1 221.0,52.0 C 219.7,53.9 220.3,55.2 216.0,56.5 C 211.7,57.8 203.3,58.8 195.0,60.0 C 186.7,61.2 177.6,62.2 166.3,64.0 C 155.0,65.8 140.3,67.2 127.3,70.5 C 114.2,73.8 101.0,77.8 88.0,84.0 C 75.0,90.2 61.0,100.9 49.0,108.0 C 37.0,115.1 22.4,123.0 15.9,126.5 C 9.4,130.0 11.0,128.6 10.0,129.0 Z" style="fill:url(#lg)" filter="url(#bl)"/>
<ellipse cx="155" cy="95" rx="22" ry="9" style="fill:#56648A;opacity:0.5" filter="url(#bl2)"/>
<path d="M 226 35 L 231 31 L 231 67 L 220 63 Z" style="fill:#5E4A35;opacity:0.9" filter="url(#bl3)"/>
<rect x="94.59999999999991" y="469.5" width="55.5" height="2.6" rx="1.3" style="fill:#F2F2F2"/>
</g>
<circle cx="122" cy="27" r="6.2" style="fill:#08080A"/>
<circle cx="122" cy="27" r="1.5" style="fill:#1A2233"/>
</svg>
<div class="t" style="left:1170.50px;top:162.17px;font-size:7.6px;line-height:11px;color:#F4F4F6;font-weight:400;font-family:'Liberation Sans',sans-serif;">12:42</div>
<svg class="x" style="left:1192.5px;top:163px;" width="46" height="10" viewBox="0 0 46 10"><circle cx="4.5" cy="4.5" r="3.6" style="fill:none;stroke:#F4F4F6;stroke-width:0.9"/><path d="M4.5 3 v2.5" style="stroke:#F4F4F6;stroke-width:0.9"/><path d="M12.5 1 h3 l2 2 v5.5 h-5 z" style="fill:#F4F4F6;stroke:none"/><path d="M27 1.5 a3 3 0 0 1 3 3 c0 2 -3 4.5 -3 4.5 s-3 -2.5 -3 -4.5 a3 3 0 0 1 3 -3" style="fill:none;stroke:#F4F4F6;stroke-width:0.9"/><rect x="35.5" y="1.5" width="6" height="6" style="fill:#F4F4F6;stroke:none"/><rect x="37" y="3" width="3" height="3" style="fill:#C8C9D0;stroke:none"/></svg>
<svg class="x" style="left:1338px;top:162px;" width="20" height="10" viewBox="0 0 20 10"><path d="M1 2.5 a8 8 0 0 1 10 0 l-5 6 z" style="fill:#F4F4F6"/><path d="M19 1 v8 h-7 z" style="fill:none;stroke:#F4F4F6;stroke-width:0.9"/><path d="M19 4 v5 h-4 z" style="fill:#F4F4F6"/></svg>
<div class="t" style="left:1186.40px;top:204.43px;font-size:10.6px;line-height:15px;color:#F6F6F8;font-weight:400;font-family:'Liberation Sans',sans-serif;text-shadow:0 0 1.5px rgba(0,0,0,0.6);letter-spacing:-0.2px">Thu, Aug 8</div>
<div class="a" style="left:1182.4px;top:521.4px;width:31.2px;height:31.2px;border-radius:50%;background:#FFFFFF;"></div>
<svg class="x" style="left:1188px;top:527px;" width="20" height="20" viewBox="0 0 20 20"><path d="M4.2 2.2 c-1.5 0.7 -2.5 2.5 -1.5 5.8 c1.3 4 4.5 7.6 8.3 8.9 c2.6 0.9 4.6 -0.1 5.3 -1.3 l-3.2 -3 l-2.3 1.3 c-1.8 -0.6 -3.9 -3 -4.5 -4.6 l1.5 -2.2 z" style="fill:#1F66D8;stroke:#1F66D8;stroke-width:1"/></svg>
<div class="a" style="left:1231.9px;top:521.4px;width:31.2px;height:31.2px;border-radius:50%;background:#FFFFFF;"></div>
<svg class="x" style="left:1236px;top:526px;" width="23" height="22" viewBox="0 0 23 22"><defs><linearGradient id="msg" x1="0" y1="0" x2="0.3" y2="1"><stop offset="0" stop-color="#8FB3F2"/><stop offset="0.3" stop-color="#8FB3F2"/><stop offset="0.32" stop-color="#0B57D0"/><stop offset="1" stop-color="#0B57D0"/></linearGradient></defs><path d="M5.5 3.5 h12 a4.5 4.5 0 0 1 4.5 4.5 v0.5 a4.5 4.5 0 0 1 -4.5 4.5 h-5 l-3 4.5 l-0.5 -4.5 h-3.5 a4.5 4.5 0 0 1 -4.5 -4.5 v-0.5 a4.5 4.5 0 0 1 4.5 -4.5 z" style="fill:url(#msg)"/><path d="M6.5 6 h11 a3.5 3.5 0 0 1 3.5 3.5 v0 a3.5 3.5 0 0 1 -3.5 3.5 h-11 a3.5 3.5 0 0 1 -3.5 -3.5 v0 a3.5 3.5 0 0 1 3.5 -3.5 z" style="fill:#0B57D0"/></svg>
<div class="a" style="left:1281.4px;top:521.4px;width:31.2px;height:31.2px;border-radius:50%;background:#4C8BF5;"></div>
<svg class="x" style="left:1286px;top:527px;" width="22" height="20" viewBox="0 0 22 20"><path d="M2.5 4 a1.2 1.2 0 0 1 1.2 -1.2 h5.3 l2.2 2.2 h7.3 a1.2 1.2 0 0 1 1.2 1.2 v9.3 a1.2 1.2 0 0 1 -1.2 1.2 h-14.8 a1.2 1.2 0 0 1 -1.2 -1.2 z" style="fill:#F1F3F8"/></svg>
<div class="a" style="left:1330.9px;top:521.4px;width:31.2px;height:31.2px;border-radius:50%;background:#A8C4F4;"></div>
<div class="a" style="left:1333.3px;top:523.8px;width:26.4px;height:26.4px;border-radius:50%;background:#4C8BF5;"></div>
<svg class="x" style="left:1336px;top:528px;" width="21" height="18" viewBox="0 0 21 18"><rect x="1.8" y="4" width="17.4" height="11" rx="2" style="fill:#F1F3F8"/><path d="M7 4 l1.5 -2 h4 l1.5 2 z" style="fill:#F1F3F8"/><circle cx="10.5" cy="9.5" r="2.6" style="fill:#4C8BF5"/></svg>
<div class="a" style="left:1180.8px;top:570.7px;width:183.2px;height:27px;border-radius:13.5px;background:#FFFFFF"></div>
<svg class="x" style="left:1188px;top:577px;" width="15" height="15" viewBox="0 0 15 15"><path d="M12.8 6.3 h-5.6 v2.6 h3.2 c-0.4 1.6 -1.7 2.6 -3.3 2.6 a3.6 3.6 0 0 1 0 -7.2 c0.9 0 1.7 0.3 2.3 0.9 l1.9 -1.9 a6.3 6.3 0 1 0 -4.2 11 c3.4 0 6 -2.4 6 -6.1 z" style="fill:none;stroke:#4285F4;stroke-width:0"/><path d="M1.5 7.5 a6 6 0 0 1 10 -4.3" style="stroke:#EA4335;stroke-width:2.2;fill:none"/><path d="M1.5 7.5 a6 6 0 0 0 2 4.5" style="stroke:#FBBC05;stroke-width:2.2;fill:none"/><path d="M3.5 12 a6 6 0 0 0 9 -1" style="stroke:#34A853;stroke-width:2.2;fill:none"/><path d="M12.5 11 a6 6 0 0 0 1 -3.5 h-6" style="stroke:#4285F4;stroke-width:2.2;fill:none"/></svg>
<svg class="x" style="left:1319px;top:576px;" width="10" height="16" viewBox="0 0 10 16"><rect x="3" y="1" width="4" height="8.5" rx="2" style="fill:#4285F4"/><path d="M1.5 7.5 a3.5 3.5 0 0 0 7 0" style="stroke:#EA4335;stroke-width:1.2;fill:none"/><path d="M5 11 v3" style="stroke:#34A853;stroke-width:1.2"/></svg>
<svg class="x" style="left:1341px;top:577px;" width="15" height="15" viewBox="0 0 15 15"><path d="M1.5 5 v-1.5 a2 2 0 0 1 2 -2 h1.5" style="stroke:#EA4335;stroke-width:1.5;fill:none"/><path d="M10 1.5 h1.5 a2 2 0 0 1 2 2 v1.5" style="stroke:#4285F4;stroke-width:1.5;fill:none"/><path d="M1.5 9.5 v1.5 a2 2 0 0 0 2 2 h1.5" style="stroke:#FBBC05;stroke-width:1.5;fill:none"/><circle cx="7.5" cy="7.3" r="2.2" style="fill:#4285F4"/><circle cx="12" cy="11.5" r="1.5" style="fill:#34A853"/></svg>
<div class="a" style="left:1417.5px;top:508.5px;width:27.5px;height:106px;border:1px solid #393B40;border-radius:4px"></div>
<svg class="ic" style="left:1424.5px;top:516px;" width="12" height="12" viewBox="0 0 12 12"><path d="M6 0.5 v11 M0.5 6 h11" style="stroke-width:1.2"/></svg>
<div class="a" style="left:1425px;top:547.5px;width:11px;height:1px;background:#55575C;"></div>
<div class="t" style="left:1424.20px;top:567.73px;font-size:10px;line-height:14px;color:#CED0D6;font-weight:700;font-family:'Liberation Sans',sans-serif;">1:1</div>
<svg class="ic" style="left:1424px;top:593.5px;" width="13" height="13" viewBox="0 0 13 13"><rect x="1" y="1" width="11" height="11" rx="1.5" style="stroke:#55575C"/><path d="M3.5 6 v-2.5 h2.5 M9.5 7 v2.5 h-2.5" style="stroke:#55575C"/></svg>
<svg class="ic" style="left:1472px;top:85px;" width="21" height="21" viewBox="0 0 21 21"><path d="M4 14.5 v-5 a6 6 0 0 1 12 0 v5 l1.5 2 h-15 z M8.5 18.5 h3"/><circle cx="16" cy="4" r="3.3" style="fill:#E55B5B;stroke:#2B2D30;stroke-width:1"/></svg>
<svg class="ic" style="left:1471.5px;top:126.5px;" width="24" height="19" viewBox="0 0 24 19"><g transform="scale(1.0)" style="stroke-width:1.40"><path d="M1.7 14.3 C1.2 12 2.5 8 4.4 6.4 C5.5 4.5 7.5 3.2 10.3 3.2 C12.5 3.2 14 4.3 15.3 5.1 C16.5 5.6 18.5 5.5 19 3.8 C19.3 2.3 18 1.5 17 1.8 C16.2 2.1 16.2 3 16.8 3.3 M19.2 4.6 C19.6 6.5 18.5 8.8 16.8 9.3 M5.2 6.9 C5.2 9 6.5 9.8 7.4 9.8 C8.5 9.8 9.5 9 9.9 8.1 M1.7 14.3 C3 14 4 12.5 5.2 12.8 C6.2 13.2 6.5 14.3 7.4 14.3 C8.5 14.3 9.2 12.8 10.1 12.8"/><circle cx="13" cy="7.6" r="0.8" style="fill:#CED0D6;stroke:none"/></g></svg>
<svg class="ic" style="left:1472px;top:165px;" width="21" height="20" viewBox="0 0 21 20"><path d="M7.5 12.5 h-3.5 a1.5 1.5 0 0 1 -1.5 -1.5 v-8.5 a1.5 1.5 0 0 1 1.5 -1.5 h6 a1.5 1.5 0 0 1 1.5 1.5 v4 M5.5 3.5 h2"/><path d="M9 18.5 a5.5 5.5 0 0 1 11 0 z"/><path d="M11 12.5 l-1 -1.5 M18 12.5 l1 -1.5"/></svg>
<div class="a" style="left:1466.5px;top:199.5px;width:30px;height:30px;background:#3574F0;border-radius:6px"></div>
<svg class="ic" style="left:1472px;top:205px;" width="20" height="20" viewBox="0 0 20 20"><path d="M7.5 15 h-3 a1.5 1.5 0 0 1 -1.5 -1.5 v-10 a1.5 1.5 0 0 1 1.5 -1.5 h6 a1.5 1.5 0 0 1 1.5 1.5 v5 M5.5 4.5 h2" style="stroke:#FFFFFF"/><rect x="8" y="10.5" width="9.5" height="5.5" rx="1" style="stroke:#FFFFFF"/><path d="M7 18 h12" style="stroke:#FFFFFF"/></svg>
<svg class="ic" style="left:1472px;top:244px;" width="20" height="20" viewBox="0 0 20 20"><path d="M10 1.5 c0.8 4.5 3.5 7.7 8.5 8.5 c-5 0.8 -7.7 4 -8.5 8.5 c-0.8 -4.5 -3.5 -7.7 -8.5 -8.5 c5 -0.8 7.7 -4 8.5 -8.5 z" style="fill:#CED0D6;stroke:none"/></svg>
<div class="t" style="left:52.00px;top:647.49px;font-size:13px;line-height:18px;color:#DFE1E5;font-weight:700;font-family:'Liberation Sans',sans-serif;">Run</div>
<svg class="ic" style="left:104px;top:647px;" width="20" height="16" viewBox="0 0 20 16"><path d="M1.5 12.8 a6.3 6.3 0 0 1 12.6 0 z" style="stroke:#5FB865;stroke-width:1.3"/><path d="M3.3 8 l-1.4 -1.9" style="stroke:#5FB865;stroke-width:1.3"/><circle cx="5" cy="10.6" r="0.6" style="fill:#5FB865;stroke:none"/><circle cx="10.6" cy="10.6" r="0.6" style="fill:#5FB865;stroke:none"/><circle cx="12.5" cy="3.6" r="3" style="fill:#5FB865;stroke:#2B2D30;stroke-width:0.8"/></svg>
<div class="t" style="left:123.60px;top:646.15px;font-size:14px;line-height:20px;color:#DFE1E5;font-weight:400;font-family:'Liberation Sans',sans-serif;">app</div>
<svg class="ic" style="left:158px;top:651.5px;" width="9" height="9" viewBox="0 0 9 9"><path d="M1 1 l7 7 M8 1 l-7 7" style="stroke:#868A91;stroke-width:1.2"/></svg>
<div class="a" style="left:91.5px;top:674px;width:86px;height:3px;background:#5D5F65;border-radius:1.5px"></div>
<svg class="ic" style="left:1406px;top:648px;" width="16" height="16" viewBox="0 0 16 16"><circle cx="8" cy="2.5" r="1.2" style="fill:#CED0D6;stroke:none"/><circle cx="8" cy="8" r="1.2" style="fill:#CED0D6;stroke:none"/><circle cx="8" cy="13.5" r="1.2" style="fill:#CED0D6;stroke:none"/></svg>
<div class="a" style="left:1434px;top:655.5px;width:13px;height:1.4px;background:#CED0D6;"></div>
<svg class="ic" style="left:52px;top:686px;" width="16" height="17" viewBox="0 0 16 17"><path d="M11.5 4.5 a6 6 0 1 0 -3 10.5" style="stroke-width:1.2"/><path d="M11.8 1 v3.8 h-3.8" style="stroke-width:1.2"/><path d="M9.5 9 l6 3.5 l-6 3.5 z" style="stroke:#5FB865;stroke-width:1.2"/></svg>
<div class="a" style="left:79.5px;top:688px;width:12.5px;height:12.5px;border:1.6px solid #DB5C5C;border-radius:2px;background:#4A2E2E"></div>
<div class="a" style="left:102px;top:684px;width:1px;height:20px;background:#43454A;"></div>
<svg class="ic" style="left:110.2px;top:685.5px;" width="16" height="16" viewBox="0 0 16 16"><circle cx="8.0" cy="3" r="1.15" style="fill:#CED0D6;stroke:none"/><circle cx="8.0" cy="8" r="1.15" style="fill:#CED0D6;stroke:none"/><circle cx="8.0" cy="13" r="1.15" style="fill:#CED0D6;stroke:none"/></svg>
<svg class="ic" style="left:51px;top:721px;" width="15" height="15" viewBox="0 0 15 15"><path d="M7.5 13 v-11 M3 6.5 l4.5 -4.5 l4.5 4.5"/></svg>
<svg class="ic" style="left:51px;top:747px;" width="15" height="15" viewBox="0 0 15 15"><path d="M7.5 2 v11 M3 8.5 l4.5 4.5 l4.5 -4.5"/></svg>
<svg class="ic" style="left:51px;top:773px;" width="16" height="15" viewBox="0 0 16 15"><path d="M1.5 2.5 h13 M1.5 7 h9.5 a2.5 2.5 0 0 1 0 5 h-3 M9.5 10 l-2 2 l2 2 M1.5 12 h3.5"/></svg>
<div class="a" style="left:48px;top:796px;width:22px;height:21.5px;background:#43454A;border-radius:4px"></div>
<svg class="ic" style="left:51px;top:799px;" width="16" height="15" viewBox="0 0 16 15"><path d="M1.5 2.5 h6 M1.5 7 h6 M1.5 12.5 h13 M11 2 v7.5 M8 7 l3 3 l3 -3"/></svg>
<svg class="ic" style="left:51px;top:825px;" width="16" height="15" viewBox="0 0 16 15"><path d="M4 5 v-3.5 h8 v3.5 M4 11 h-2.5 v-6 h13 v6 h-2.5 M4 9 h8 v5 h-8 z"/></svg>
<svg class="ic" style="left:51px;top:851px;" width="15" height="16" viewBox="0 0 15 16"><path d="M1.5 3.5 h12 M5.5 3.5 v-2 h4 v2 M3 3.5 l0.8 10.5 a1 1 0 0 0 1 1 h5.4 a1 1 0 0 0 1 -1 l0.8 -10.5 M6 6.5 v5.5 M9 6.5 v5.5"/></svg>
<div class="t m" style="left:90.00px;top:715.46px;font-size:12.93px;line-height:18px;color:#BCBEC4;font-weight:400;font-family:'Liberation Mono',monospace;">2024-08-07 23:38:52: Launching app on 'Pixel 7 Pro API 34'.</div>
<div class="t m" style="left:90.00px;top:737.24px;font-size:12.93px;line-height:18px;color:#BCBEC4;font-weight:400;font-family:'Liberation Mono',monospace;">Starting: Intent { act=android.intent.action.MAIN cat=[android.intent.category.LAUNCHER] cmp=study.elective.app/.MainActivity }</div>
<div class="t m" style="left:90.00px;top:780.80px;font-size:12.93px;line-height:18px;color:#548AF7;font-weight:400;font-family:'Liberation Mono',monospace;text-decoration:underline;text-underline-offset:2px">Open logcat panel for emulator Pixel 7 Pro API 34</div>
<div class="t m" style="left:90.00px;top:802.58px;font-size:12.93px;line-height:18px;color:#BCBEC4;font-weight:400;font-family:'Liberation Mono',monospace;">Connected to process 26025 on device 'Pixel_7_Pro_API_34 [emulator-5554]'.</div>
<div class="a" style="left:12.8px;top:954px;width:8px;height:8px;border:1.4px solid #548AF7;border-radius:2px"></div>
<div class="t" style="left:25.30px;top:948.45px;font-size:14px;line-height:20px;color:#B4B8BF;font-weight:400;font-family:'Liberation Sans',sans-serif;">electivestudy</div>
<svg class="ic" style="left:116px;top:953.5px;" width="6" height="10" viewBox="0 0 6 10"><path d="M1 1 L5 5 L1 9" style="stroke:#9DA0A8"/></svg>
<div class="a" style="left:133px;top:954px;width:8px;height:8px;border:1.4px solid #548AF7;border-radius:2px"></div>
<div class="t" style="left:143.00px;top:948.45px;font-size:14px;line-height:20px;color:#B4B8BF;font-weight:400;font-family:'Liberation Sans',sans-serif;">app</div>
<svg class="ic" style="left:177.5px;top:953.5px;" width="6" height="10" viewBox="0 0 6 10"><path d="M1 1 L5 5 L1 9" style="stroke:#9DA0A8"/></svg>
<div class="t" style="left:191.00px;top:948.45px;font-size:14px;line-height:20px;color:#B4B8BF;font-weight:400;font-family:'Liberation Sans',sans-serif;">src</div>
<svg class="ic" style="left:220px;top:953.5px;" width="6" height="10" viewBox="0 0 6 10"><path d="M1 1 L5 5 L1 9" style="stroke:#9DA0A8"/></svg>
<div class="a" style="left:233.5px;top:954px;width:8px;height:8px;border:1.4px solid #548AF7;border-radius:2px"></div>
<div class="t" style="left:245.50px;top:948.45px;font-size:14px;line-height:20px;color:#B4B8BF;font-weight:400;font-family:'Liberation Sans',sans-serif;">main</div>
<svg class="ic" style="left:285px;top:953.5px;" width="6" height="10" viewBox="0 0 6 10"><path d="M1 1 L5 5 L1 9" style="stroke:#9DA0A8"/></svg>
<div class="t" style="left:298.80px;top:948.45px;font-size:14px;line-height:20px;color:#B4B8BF;font-weight:400;font-family:'Liberation Sans',sans-serif;">java</div>
<svg class="ic" style="left:335px;top:953.5px;" width="6" height="10" viewBox="0 0 6 10"><path d="M1 1 L5 5 L1 9" style="stroke:#9DA0A8"/></svg>
<div class="t" style="left:348.30px;top:948.45px;font-size:14px;line-height:20px;color:#B4B8BF;font-weight:400;font-family:'Liberation Sans',sans-serif;">study</div>
<svg class="ic" style="left:392.5px;top:953.5px;" width="6" height="10" viewBox="0 0 6 10"><path d="M1 1 L5 5 L1 9" style="stroke:#9DA0A8"/></svg>
<div class="t" style="left:406.70px;top:948.45px;font-size:14px;line-height:20px;color:#B4B8BF;font-weight:400;font-family:'Liberation Sans',sans-serif;">elective</div>
<svg class="ic" style="left:465.5px;top:953.5px;" width="6" height="10" viewBox="0 0 6 10"><path d="M1 1 L5 5 L1 9" style="stroke:#9DA0A8"/></svg>
<div class="t" style="left:479.00px;top:948.45px;font-size:14px;line-height:20px;color:#B4B8BF;font-weight:400;font-family:'Liberation Sans',sans-serif;">app</div>
<svg class="ic" style="left:514px;top:953.5px;" width="6" height="10" viewBox="0 0 6 10"><path d="M1 1 L5 5 L1 9" style="stroke:#9DA0A8"/></svg>
<svg class="ic" style="left:528px;top:951px;" width="14" height="14" viewBox="0 0 14 14"><path d="M1 1 h11.5 l-5.5 6 l5.5 6 h-11.5 z" style="stroke:#B07FE0;stroke-width:1.4;fill:#33294A"/></svg>
<div class="t" style="left:547.00px;top:948.45px;font-size:14px;line-height:20px;color:#B4B8BF;font-weight:400;font-family:'Liberation Sans',sans-serif;">MainActivity.kt</div>
<svg class="ic" style="left:648px;top:953.5px;" width="6" height="10" viewBox="0 0 6 10"><path d="M1 1 L5 5 L1 9" style="stroke:#9DA0A8"/></svg>
<svg class="ic" style="left:662px;top:950px;" width="17" height="16" viewBox="0 0 17 16"><circle cx="7.5" cy="7.5" r="6.3" style="stroke:#548AF7;stroke-width:1.4"/><path d="M10 5.5 a3 3 0 1 0 0 4" style="stroke:#548AF7;stroke-width:1.4"/><path d="M15.5 9 h-5.5 v6 h5.5 l-2.8 -3 z" style="stroke:#B07FE0;stroke-width:1.3;fill:#2B2D30"/></svg>
<div class="t" style="left:682.30px;top:948.45px;font-size:14px;line-height:20px;color:#B4B8BF;font-weight:400;font-family:'Liberation Sans',sans-serif;">MainActivity</div>
<svg class="ic" style="left:768px;top:953.5px;" width="6" height="10" viewBox="0 0 6 10"><path d="M1 1 L5 5 L1 9" style="stroke:#9DA0A8"/></svg>
<svg class="ic" style="left:781.5px;top:950px;" width="16" height="16" viewBox="0 0 16 16"><circle cx="8" cy="8" r="6.8" style="stroke:#E55B5B;stroke-width:1.4;fill:#4A2E2E"/><path d="M4.8 11 v-4.5 a1.3 1.3 0 0 1 2.6 0 v4.5 M7.4 6.5 a1.3 1.3 0 0 1 2.6 0 v4.5" style="stroke:#E55B5B;stroke-width:1.2"/></svg>
<div class="t" style="left:801.00px;top:948.45px;font-size:14px;line-height:20px;color:#B4B8BF;font-weight:400;font-family:'Liberation Sans',sans-serif;">onCreate</div>
<div class="t" style="left:1197.50px;top:948.45px;font-size:14px;line-height:20px;color:#B4B8BF;font-weight:400;font-family:'Liberation Sans',sans-serif;">21:22</div>
<div class="t" style="left:1246.00px;top:948.45px;font-size:14px;line-height:20px;color:#B4B8BF;font-weight:400;font-family:'Liberation Sans',sans-serif;">LF</div>
<div class="t" style="left:1276.50px;top:948.45px;font-size:14px;line-height:20px;color:#B4B8BF;font-weight:400;font-family:'Liberation Sans',sans-serif;">UTF-8</div>
<svg class="ic" style="left:1332px;top:950px;" width="16" height="16" viewBox="0 0 16 16"><path d="M2 2 h12 v9.5 h-6 l-3 3 v-3 h-3 z" style="stroke:#B4B8BF;stroke-width:1.3"/><path d="M8 5 v3" style="stroke:#B4B8BF;stroke-width:1.3"/></svg>
<div class="t" style="left:1364.00px;top:948.45px;font-size:14px;line-height:20px;color:#B4B8BF;font-weight:400;font-family:'Liberation Sans',sans-serif;">4 spaces</div>
<svg class="ic" style="left:1437px;top:949px;" width="17" height="17" viewBox="0 0 17 17"><rect x="1.5" y="8" width="10" height="7.5" rx="1.2" style="stroke:#B4B8BF;stroke-width:1.3"/><path d="M9 8 v-3 a3 3 0 0 1 6 0 v1" style="stroke:#B4B8BF;stroke-width:1.3"/><path d="M6.5 11 v2" style="stroke:#B4B8BF;stroke-width:1.3"/></svg>
</body></html>
